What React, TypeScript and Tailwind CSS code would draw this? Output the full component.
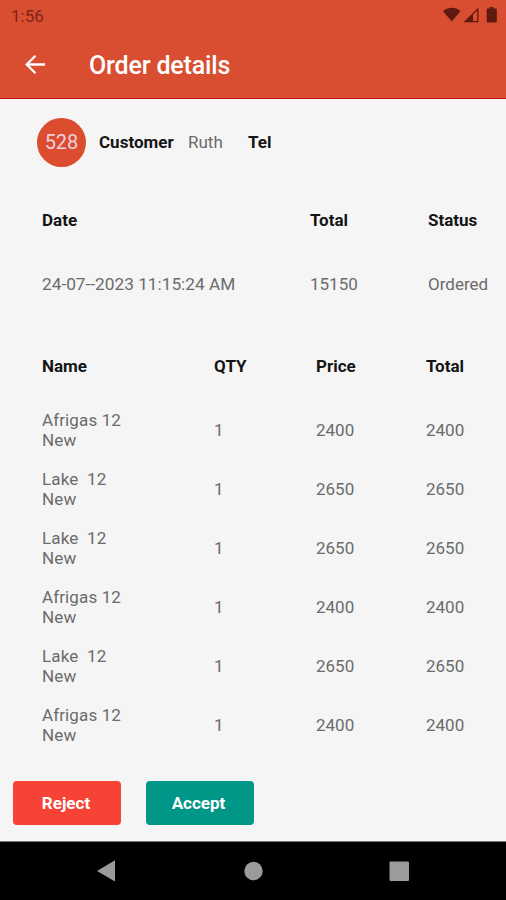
import React from 'react';

interface OrderItem {
  name: string;
  qty: number;
  price: number;
  total: number;
}

const items: OrderItem[] = [
  { name: 'Afrigas 12\nNew', qty: 1, price: 2400, total: 2400 },
  { name: 'Lake  12\nNew', qty: 1, price: 2650, total: 2650 },
  { name: 'Lake  12\nNew', qty: 1, price: 2650, total: 2650 },
  { name: 'Afrigas 12\nNew', qty: 1, price: 2400, total: 2400 },
  { name: 'Lake  12\nNew', qty: 1, price: 2650, total: 2650 },
  { name: 'Afrigas 12\nNew', qty: 1, price: 2400, total: 2400 },
];

const StatusBar: React.FC = () => (
  <div className="flex h-8 items-center justify-between pl-[11px] pr-2 text-[#5e1a10]">
    <span className="text-[17px] leading-none text-[#7c2617]">1:56</span>
    <svg width="56" height="18" viewBox="0 0 56 18" fill="currentColor">
      <path d="M1 4.200C6-.3 13.500-.3 18.500 4.200L9.800 14.500z" />
      <path d="M21.500 15.300L36.500.5v14.800zM31 7.500V14h4.200V3.700z" fillRule="evenodd" />
      <path d="M47.500-.1h4v1.500h2.500q.8 0 .8.800v12.400q0 .8-.8.800h-8.500q-.8 0-.8-.8V2.200q0-.8.8-.8h2z" />
    </svg>
  </div>
);

const Header: React.FC = () => (
  <header className="h-[99px] border-b border-[#c4140c] bg-[#d94d31]">
    <StatusBar />
    <div className="flex h-[66px] items-center pl-[25px] text-white">
      <svg width="20" height="20" viewBox="0 0 20 20" fill="none" stroke="currentColor" strokeWidth="2.3">
        <path d="M20 9.500H2M10.500.8L1.700 9.500l8.800 8.800" />
      </svg>
      <h1 className="ml-11 text-[25px] font-medium leading-none tracking-[-0.16px]">Order details</h1>
    </div>
  </header>
);

const NavBar: React.FC = () => (
  <nav className="h-[59px] border-t border-[#777777] bg-black">
    <svg width="506" height="58" viewBox="0 0 506 58" fill="#9b9b9b">
      <path d="M115 18.300v21.200L97 29z" />
      <circle cx="253.500" cy="29" r="9.200" />
      <rect x="389.500" y="19.500" width="19.500" height="19.500" rx="1" />
    </svg>
  </nav>
);

const App: React.FC = () => {
  return (
    <div className="flex h-[900px] w-[506px] flex-col overflow-hidden bg-[#f5f5f5] font-['Roboto',sans-serif] text-[17px] text-[#6b6b6b]">
      <Header />

      <main className="flex-1">
        <section className="flex h-[87px] items-center pl-[37px]">
          <div className="mb-px flex size-[49px] items-center justify-center rounded-full bg-[#dc4c2e] text-[20px] text-[#ead0e0]">
            528
          </div>
          <span className="ml-[13px] w-[89px] font-bold text-[#151515]">Customer</span>
          <span className="w-[60px]">Ruth</span>
          <span className="font-bold text-[#151515]">Tel</span>
        </section>

        <section className="mx-3">
          <div className="grid h-[67px] grid-cols-[268px_118px_auto] items-center border-b-2 border-[#f7f7f7] pl-[30px] pt-1 font-bold text-[#151515]">
            <span>Date</span>
            <span>Total</span>
            <span>Status</span>
          </div>
          <div className="grid h-[59px] grid-cols-[268px_118px_auto] items-center border-b-2 border-[#f7f7f7] pl-[30px] pt-[6px]">
            <span className="text-[17.25px]">24-07--2023 11:15:24 AM</span>
            <span>15150</span>
            <span>Ordered</span>
          </div>
        </section>

        <section className="mx-3 mt-5">
          <div className="grid h-[67px] grid-cols-[172px_102px_110px_auto] items-center border-b-2 border-[#f7f7f7] pl-[30px] pt-1 font-bold text-[#151515]">
            <span>Name</span>
            <span>QTY</span>
            <span>Price</span>
            <span>Total</span>
          </div>
          {items.map((item, i) => (
            <div
              key={i}
              className="grid h-[59px] grid-cols-[172px_102px_110px_auto] items-center border-b-2 border-[#f7f7f7] pl-[30px] pt-1"
            >
              <span className="whitespace-pre leading-[20px] tracking-[0.12px]">{item.name}</span>
              <span className="pt-0.5">{item.qty}</span>
              <span className="pt-0.5">{item.price}</span>
              <span className="pt-0.5">{item.total}</span>
            </div>
          ))}
        </section>

        <div className="mt-[28px] flex gap-[25px] pl-[12.5px] font-bold text-white">
          <button className="h-11 w-[108px] rounded-[4px] bg-[#f64336] pr-px pt-0.5">Reject</button>
          <button className="h-11 w-[108px] rounded-[4px] bg-[#009688] pr-0.5 pt-0.5">Accept</button>
        </div>
      </main>

      <NavBar />
    </div>
  );
};

export default App;
